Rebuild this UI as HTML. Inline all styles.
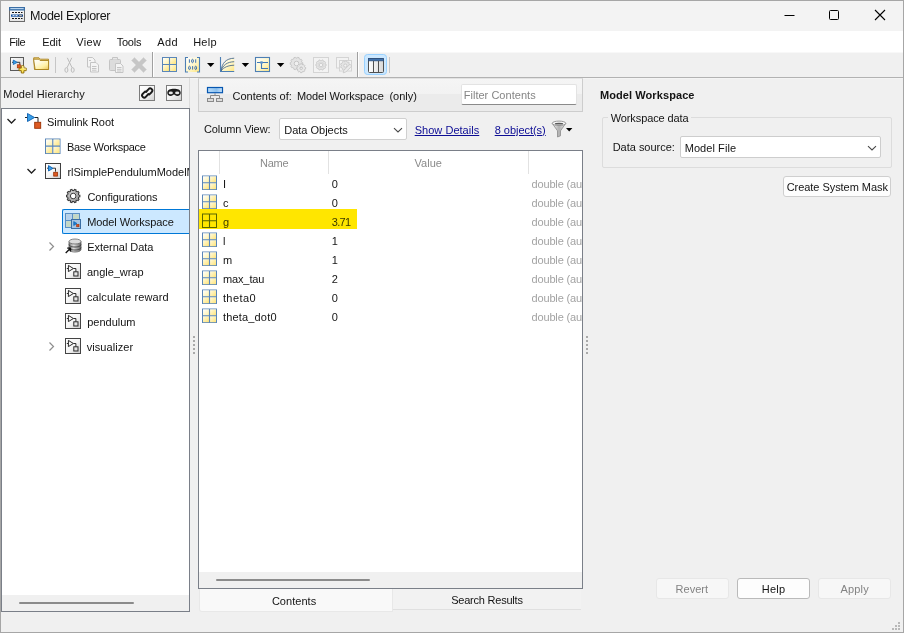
<!DOCTYPE html>
<html><head><meta charset="utf-8"><title>Model Explorer</title>
<style>
html,body{margin:0;padding:0;}
body{width:904px;height:633px;overflow:hidden;background:#f0f0f0;font-family:"Liberation Sans",sans-serif;font-size:11px;color:#141414;position:relative;}
.a{position:absolute;box-sizing:border-box;}
.t{position:absolute;white-space:nowrap;line-height:16px;height:16px;}
svg{position:absolute;overflow:visible;}
#root{position:absolute;left:0;top:0;width:904px;height:633px;will-change:transform;}

</style></head><body>
<div id="root">
<div class="a" style="left:0;top:0;width:904px;height:633px;border:1px solid #a6a6a6;background:#f0f0f0;"></div>
<div class="a" style="left:1px;top:1px;width:902px;height:30px;background:#f3f3f3;"></div>
<div class="a" style="left:1px;top:31px;width:902px;height:21px;background:#fff;"></div>
<div class="a" style="left:1px;top:52px;width:902px;height:1px;background:#f8f8f8;"></div>
<div class="a" style="left:1px;top:77px;width:902px;height:1px;background:#b2b2b2;"></div>
<div class="a" style="left:1px;top:78px;width:902px;height:1px;background:#f4f4f4;"></div>
<svg style="left:9px;top:7px" width="16" height="15" viewBox="0 0 16 15">
<defs><linearGradient id="gti" x1="0" y1="0" x2="0" y2="1"><stop offset="0" stop-color="#fff"/><stop offset="1" stop-color="#e4e4e4"/></linearGradient></defs>
<rect x="0.5" y="0.5" width="15" height="14" fill="url(#gti)" stroke="#6a6a6a"/>
<rect x="0.5" y="0.5" width="15" height="2.5" fill="#5c8fc4" stroke="#3b6ea5"/>
<rect x="1.5" y="1" width="13" height="1" fill="#b8d4ee"/>
<path d="M3 5.5h2M6 5.5h2M9 5.5h2M12 5.5h1.5M3 11.500h2M6 11.500h2M9 11.500h2M12 11.500h1.500" stroke="#111" stroke-width="1"/>
<rect x="2" y="7.500" width="12" height="2.200" fill="#0a4aa0"/>
<path d="M3.500 8.600h2M6.500 8.600h2" stroke="#fff" stroke-width="0.900"/>
<rect x="10" y="8" width="3" height="1.200" fill="#e8e8e8" stroke="#333" stroke-width="0.500"/>
</svg>
<div class="t" style="left:30.1px;top:8px;font-size:12.5px;letter-spacing:-0.28px;">Model Explorer</div>
<svg style="left:780px;top:5px" width="110" height="20" viewBox="780 5 110 20">
<path d="M784.500 15.500h10" stroke="#000" stroke-width="1" fill="none"/>
<rect x="829.500" y="10.500" width="9" height="9" rx="1" fill="none" stroke="#000" stroke-width="1"/>
<path d="M875 10l10 10M885 10l-10 10" stroke="#000" stroke-width="1.100" fill="none"/>
</svg>
<div class="t" style="left:9.2px;top:34px;font-size:11px;letter-spacing:-0.47px;">File</div>
<div class="t" style="left:42.2px;top:34px;font-size:11px;letter-spacing:-0.05px;">Edit</div>
<div class="t" style="left:76.2px;top:34px;font-size:11px;letter-spacing:0.39px;">View</div>
<div class="t" style="left:116.7px;top:34px;font-size:11px;letter-spacing:-0.22px;">Tools</div>
<div class="t" style="left:157.2px;top:34px;font-size:11px;letter-spacing:0.37px;">Add</div>
<div class="t" style="left:193.2px;top:34px;font-size:11px;letter-spacing:0.23px;">Help</div>
<div class="a" style="left:152px;top:52px;width:1px;height:25px;background:#a0a0a0;"></div><div class="a" style="left:153px;top:52px;width:1px;height:25px;background:#fff;"></div>
<div class="a" style="left:357px;top:52px;width:1px;height:25px;background:#a0a0a0;"></div><div class="a" style="left:358px;top:52px;width:1px;height:25px;background:#fff;"></div>
<div class="a" style="left:55px;top:57px;width:1px;height:16px;background:#c6c6c6;"></div>
<div class="a" style="left:389px;top:57px;width:1px;height:16px;background:#c6c6c6;"></div>
<svg style="left:0;top:52px" width="400" height="26" viewBox="0 52 400 26">
<defs>
<linearGradient id="gy" x1="0" y1="0" x2="1" y2="1"><stop offset="0" stop-color="#ffffff"/><stop offset="0.500" stop-color="#fff8d0"/><stop offset="1" stop-color="#ffe680"/></linearGradient>
<linearGradient id="gyc" x1="0" y1="0" x2="1" y2="1"><stop offset="0" stop-color="#ffffff"/><stop offset="1" stop-color="#fff2a8"/></linearGradient>
<linearGradient id="gyc2" x1="0" y1="0" x2="1" y2="1"><stop offset="0" stop-color="#fffbe0"/><stop offset="1" stop-color="#ffe478"/></linearGradient>
<linearGradient id="gg" x1="0" y1="0" x2="1" y2="1"><stop offset="0" stop-color="#ffffff"/><stop offset="1" stop-color="#d4d4d4"/></linearGradient>
<linearGradient id="gfo" x1="0" y1="0" x2="0.800" y2="1"><stop offset="0" stop-color="#ffffff"/><stop offset="0.350" stop-color="#fffbe4"/><stop offset="0.750" stop-color="#fff0a4"/><stop offset="1" stop-color="#f0d070"/></linearGradient>
<linearGradient id="gcol" x1="0" y1="0" x2="1" y2="0"><stop offset="0" stop-color="#ffffff"/><stop offset="1" stop-color="#d8d8d8"/></linearGradient>
</defs>
<!-- new model -->
<rect x="10.500" y="57.500" width="13" height="13" fill="url(#gg)" stroke="#5a5a5a"/>
<path d="M12 62.300h1.500M17 62.300h2.800v3" stroke="#222" fill="none" stroke-width="0.900"/>
<path d="M13.300 60.100l4 2.200l-4 2.200z" fill="#3aa0e8" stroke="#0b5fb0" stroke-width="0.800"/>
<rect x="17.300" y="64.800" width="3" height="3" fill="#e05a20" stroke="#a83200" stroke-width="0.700"/>
<path d="M21.300 65.800h2.600v2.300h2.300v2.600h-2.300v2.300h-2.600v-2.300h-2.300v-2.600h2.300z" fill="#ffe65a" stroke="#8a6400" stroke-width="0.900"/>
<path d="M21.900 66.500h1.300v2.300h2.300v0.700" fill="none" stroke="#fff8c0" stroke-width="0.700"/>
<!-- folder -->
<path d="M33.700 57.800h5.300l1.300 1.400h8.200v10.300h-14z" fill="#f4dc8c" stroke="#a8801c" stroke-width="0.900"/>
<path d="M33.600 59.200l1.500 10.300h13.500v-9h-8.500l-1.200 -1.300z" fill="url(#gfo)" stroke="#a8801c" stroke-width="0.900"/>
<!-- scissors -->
<g stroke="#bcbcbc" fill="none" stroke-width="1">
<path d="M71.800 57.800l-4.800 10M67.300 57.800l4.800 10" />
<ellipse cx="66.400" cy="70" rx="1.500" ry="2.300"/><ellipse cx="72.700" cy="70" rx="1.500" ry="2.300"/>
</g>
<!-- copy -->
<g stroke="#c4c4c4" fill="#f4f4f4" stroke-width="1">
<path d="M87.500 57.500h5l2.500 2.500v7h-7.500z"/>
<path d="M90.500 62.500h5.500l2.500 2.500v7h-8z"/>
<path d="M92 66.500h4.500M92 68.500h4.500M92 70.200h4.500M89 60.500h2" fill="none"/>
</g>
<!-- paste -->
<g stroke="#c4c4c4" stroke-width="1">
<rect x="109.500" y="59.500" width="11" height="11" rx="1" fill="#dcdcdc"/>
<path d="M112.500 59.500v-2h5v2" fill="#e8e8e8"/>
<path d="M115.500 63.500h5l2.500 2.500v6.500h-7.500z" fill="#f4f4f4"/>
<path d="M117 67.500h4.500M117 69.300h4.500M117 71h4.500" fill="none"/>
</g>
<!-- delete -->
<path d="M131.500 60.500l3-3l4.500 4.500l4.500-4.500l3 3l-4.500 4.500l4.500 4.500l-3 3l-4.500-4.500l-4.500 4.500l-3-3l4.500-4.500z" fill="#c6c6c6" stroke="#d4d4d4" stroke-width="0.600"/>
<!-- grid -->
<rect x="162.500" y="57.500" width="14" height="14" fill="#fff" stroke="#5a86b8"/>
<rect x="163" y="58" width="6" height="6" fill="url(#gyc)"/><rect x="170" y="58" width="6" height="6" fill="url(#gyc2)"/><rect x="163" y="65" width="6" height="6" fill="url(#gyc2)"/><rect x="170" y="65" width="6" height="6" fill="url(#gyc2)"/>
<path d="M169.500 57.500v14M162.500 64.500h14" stroke="#5a86b8" stroke-width="1.100"/>
<!-- 101 -->
<rect x="186" y="57.500" width="13" height="14.500" fill="url(#gy)"/>
<path d="M188 57.500h-2.500v14.500h2.500M197 57.500h2.500v14.500h-2.500" stroke="#4d7fb4" fill="none" stroke-width="1.100"/>
<g stroke="#2f66b0" fill="none" stroke-width="0.900">
<path d="M189.400 59.300v3.500M195.700 59.300v3.500M192.600 66.100v3.500"/>
<ellipse cx="192.500" cy="61" rx="0.900" ry="1.700"/><ellipse cx="189.500" cy="67.900" rx="0.900" ry="1.700"/><ellipse cx="195.700" cy="67.900" rx="0.900" ry="1.700"/>
</g>
<!-- arrows -->
<path d="M207 63h7.400l-3.700 4z" fill="#000"/>
<path d="M241.700 63h7.400l-3.700 4z" fill="#000"/>
<path d="M276.900 63h7.400l-3.700 4z" fill="#000"/>
<!-- curves -->
<path d="M221 71.500C222 63 226 58.500 234.200 58.200V71.500z" fill="url(#gy)"/>
<g stroke="#4a6a8c" fill="none" stroke-width="0.900">
<path d="M221 71c1-8 5-12.500 13.200-12.800"/>
<path d="M221 71c2-6 6-9 13.200-9.300"/>
<path d="M221 71c3-4 7-5.500 13.200-5.800"/>
</g>
<path d="M220.500 57v14.500h13.700" stroke="#4d7fb4" fill="none" stroke-width="1.100"/>
<!-- T icon -->
<rect x="255.500" y="57.500" width="14" height="14" fill="url(#gy)" stroke="#4d7fb4" stroke-width="1.100"/>
<path d="M257 62.500h11M261.500 62.500v6h6.500" stroke="#3f78b8" fill="none" stroke-width="1.100"/>
<rect x="260.300" y="61.300" width="2.400" height="2.400" fill="#5f94cc"/>
<!-- gears disabled -->
<path d="M301.89 62.43L302.76 62.76L302.76 64.24L301.89 64.57L301.49 65.80L302.00 66.58L301.13 67.78L300.23 67.54L299.19 68.30L299.14 69.22L297.73 69.68L297.15 68.96L295.85 68.96L295.27 69.68L293.86 69.22L293.81 68.30L292.77 67.54L291.87 67.78L291.00 66.58L291.51 65.80L291.11 64.57L290.24 64.24L290.24 62.76L291.11 62.43L291.51 61.20L291.00 60.42L291.87 59.22L292.77 59.46L293.81 58.70L293.86 57.78L295.27 57.32L295.85 58.04L297.15 58.04L297.73 57.32L299.14 57.78L299.19 58.70L300.23 59.46L301.13 59.22L302.00 60.42L301.49 61.20zM294.20 63.50a2.30 2.30 0 1 0 4.60 0a2.30 2.30 0 1 0 -4.60 0z" fill="#e4e4e4" stroke="#c2c2c2" stroke-width="0.900" fill-rule="evenodd"/>
<path d="M304.89 67.28L305.65 67.54L305.65 68.86L304.89 69.12L304.46 70.15L304.81 70.88L303.88 71.81L303.15 71.46L302.12 71.89L301.86 72.65L300.54 72.65L300.28 71.89L299.25 71.46L298.52 71.81L297.59 70.88L297.94 70.15L297.51 69.12L296.75 68.86L296.75 67.54L297.51 67.28L297.94 66.25L297.59 65.52L298.52 64.59L299.25 64.94L300.28 64.51L300.54 63.75L301.86 63.75L302.12 64.51L303.15 64.94L303.88 64.59L304.81 65.52L304.46 66.25zM299.90 68.20a1.30 1.30 0 1 0 2.60 0a1.30 1.30 0 1 0 -2.60 0z" fill="#e8e8e8" stroke="#c2c2c2" stroke-width="0.900" fill-rule="evenodd"/>
<rect x="313.500" y="57.500" width="15" height="15" fill="#f3f3f3" stroke="#d4d4d4"/>
<path d="M325.41 64.12L326.16 64.39L326.16 65.61L325.41 65.88L325.09 66.88L325.54 67.54L324.82 68.53L324.05 68.30L323.20 68.93L323.18 69.72L322.01 70.10L321.53 69.47L320.47 69.47L319.99 70.10L318.82 69.72L318.80 68.93L317.95 68.30L317.18 68.53L316.46 67.54L316.91 66.88L316.59 65.88L315.84 65.61L315.84 64.39L316.59 64.12L316.91 63.12L316.46 62.46L317.18 61.47L317.95 61.70L318.80 61.07L318.82 60.28L319.99 59.90L320.47 60.53L321.53 60.53L322.01 59.90L323.18 60.28L323.20 61.07L324.05 61.70L324.82 61.47L325.54 62.46L325.09 63.12zM319.20 65.00a1.80 1.80 0 1 0 3.60 0a1.80 1.80 0 1 0 -3.60 0z" fill="#e6e6e6" stroke="#c8c8c8" stroke-width="0.900" fill-rule="evenodd"/>
<circle cx="321" cy="65" r="3" fill="none" stroke="#d6d6d6" stroke-width="0.700"/>
<rect x="336.500" y="57.500" width="12" height="10.500" fill="#f3f3f3" stroke="#d4d4d4"/>
<rect x="339.500" y="60.500" width="12" height="10.500" fill="#f3f3f3" stroke="#d4d4d4"/>
<path d="M349.30 64.71L350.06 64.97L350.06 66.23L349.30 66.49L348.94 67.49L349.35 68.18L348.54 69.14L347.80 68.85L346.87 69.39L346.74 70.18L345.51 70.40L345.12 69.70L344.07 69.51L343.46 70.03L342.38 69.41L342.53 68.62L341.84 67.80L341.04 67.82L340.61 66.64L341.24 66.14L341.24 65.06L340.61 64.56L341.04 63.38L341.84 63.40L342.53 62.58L342.38 61.79L343.46 61.17L344.07 61.69L345.12 61.50L345.51 60.80L346.74 61.02L346.87 61.81L347.80 62.35L348.54 62.06L349.35 63.02L348.94 63.71zM343.70 65.60a1.60 1.60 0 1 0 3.20 0a1.60 1.60 0 1 0 -3.20 0z" fill="#e4e4e4" stroke="#c8c8c8" stroke-width="0.900" fill-rule="evenodd"/>
<path d="M343.200 72.800l0.800-2.600l6-6l1.800 1.800l-6 6z" fill="#ececec" stroke="#c6c6c6" stroke-width="0.800"/>
<!-- columns button -->
<rect x="364.500" y="54.500" width="22" height="20" rx="3" fill="#cce8ff" stroke="#99d1ff"/>
<rect x="368.500" y="58.500" width="15" height="14" rx="1" fill="url(#gcol)" stroke="#505050"/>
<rect x="368.500" y="58.500" width="15" height="2.300" fill="#3f72ad" stroke="#2c4f7c" stroke-width="0.800"/>
<path d="M373.500 61v11.500M378.500 61v11.500" stroke="#505050" stroke-width="1"/>
</svg>
<div class="a" style="left:1px;top:78px;width:189px;height:30px;background:#f1f1f1;border-right:1px solid #dcdcdc;"></div>
<div class="t" style="left:3.2px;top:86px;font-size:11px;letter-spacing:0.10px;">Model Hierarchy</div>
<svg style="left:136px;top:82px" width="50" height="22" viewBox="136 82 50 22">
<defs><linearGradient id="gbtn" x1="0" y1="0" x2="1" y2="1"><stop offset="0" stop-color="#ffffff"/><stop offset="0.500" stop-color="#f4f4f4"/><stop offset="1" stop-color="#cfcfcf"/></linearGradient></defs>
<rect x="139.500" y="85.500" width="15" height="15" fill="url(#gbtn)" stroke="#7c7c7c"/>
<rect x="166.500" y="85.500" width="15" height="15" fill="url(#gbtn)" stroke="#7c7c7c"/>
<g fill="none" stroke="#1a1a1a" stroke-width="1.900" stroke-linecap="round">
<path d="M146 92l2.600-2.800a2.100 2.100 0 0 1 3.200 2.800l-2.600 2.600"/>
<path d="M148.400 94l-2.600 2.800a2.100 2.100 0 0 1 -3.200 -2.800l2.600 -2.600"/>
</g>
<path d="M167.300 92.600c0.300-3 3-3.800 6.700-3.800s6.400 0.800 6.700 3.800c0.200 2-1.400 3.400-3.400 3.400c-1.800 0-2.400-1.400-3.300-1.400s-1.500 1.400-3.300 1.400c-2 0-3.600-1.400-3.400-3.400z" fill="#1a1a1a"/>
<ellipse cx="170.800" cy="92.900" rx="2.100" ry="1.400" fill="#e4e4e4"/><ellipse cx="177.200" cy="92.900" rx="2.100" ry="1.400" fill="#e4e4e4"/>
</svg>
<div class="a" style="left:1px;top:108px;width:189px;height:504px;border:1px solid #7a7f88;background:#fff;"></div>
<div class="a" style="left:2px;top:595px;width:187px;height:16px;background:#f0f0f0;"></div>
<div class="a" style="left:19px;top:602px;width:115px;height:2px;background:#8b8b8b;border-radius:1px;"></div>
<div class="a" style="left:62px;top:209px;width:127px;height:25px;border:1px solid #0078d7;border-right:none;border-radius:2px 0 0 2px;background:#cce8ff;"></div>
<svg style="left:0;top:107px" width="190" height="300" viewBox="0 107 190 300">
<defs>
<linearGradient id="gsub" x1="0" y1="0" x2="1" y2="1"><stop offset="0" stop-color="#ffffff"/><stop offset="0.500" stop-color="#f6f6f6"/><stop offset="1" stop-color="#cccccc"/></linearGradient>
<linearGradient id="gy2" x1="0" y1="0" x2="1" y2="1"><stop offset="0" stop-color="#ffffff"/><stop offset="0.450" stop-color="#fff6c4"/><stop offset="1" stop-color="#ffe36e"/></linearGradient>
<linearGradient id="gdb" x1="0" y1="0" x2="1" y2="0"><stop offset="0" stop-color="#787878"/><stop offset="0.400" stop-color="#e0e0e0"/><stop offset="1" stop-color="#5e5e5e"/></linearGradient>
<radialGradient id="ggear" cx="0.400" cy="0.350" r="0.700"><stop offset="0" stop-color="#f4f4f4"/><stop offset="1" stop-color="#a8a8a8"/></radialGradient>
</defs>
<path d="M7.5 119.0l4 4l4-4" fill="none" stroke="#1e1e1e" stroke-width="1.300"/>
<path d="M27.5 169.0l4 4l4-4" fill="none" stroke="#1e1e1e" stroke-width="1.300"/>
<path d="M49.5 242.5l4 4l-4 4" fill="none" stroke="#8e8e8e" stroke-width="1.200"/>
<path d="M49.5 342.5l4 4l-4 4" fill="none" stroke="#8e8e8e" stroke-width="1.200"/>
<path d="M25 117.500h2M34.500 117.500h3.500v4.500" stroke="#222" fill="none" stroke-width="1"/>
<path d="M27.500 113.500l7 4l-7 4z" fill="#3aa0e8" stroke="#0b5fb0" stroke-width="0.900"/>
<rect x="34.700" y="122.300" width="6" height="6" fill="#dd5a22" stroke="#9c3000" stroke-width="0.900"/>
<g transform="translate(45,138.500) scale(1.035,1.070)"><rect x="0.5" y="0.5" width="14" height="13.500" fill="#fff" stroke="#5a86b8"/><rect x="1.0" y="1.0" width="6" height="6" fill="url(#gyc)"/><rect x="8.0" y="1.0" width="6" height="6" fill="url(#gyc2)"/><rect x="1.0" y="7.7" width="6" height="6" fill="url(#gyc2)"/><rect x="8.0" y="7.7" width="6" height="6" fill="url(#gyc2)"/><path d="M7.5 0.5v13.500M0.5 7.2h14" stroke="#5a86b8" stroke-width="1.100"/></g>
<rect x="45.500" y="163.500" width="15" height="15" fill="url(#gsub)" stroke="#3e3e3e"/>
<path d="M47 168.200h1.200M53 168.200h2.500v3.500" stroke="#222" fill="none" stroke-width="0.900"/>
<path d="M48.500 165.600l4.500 2.700l-4.500 2.700z" fill="#3aa0e8" stroke="#0b5fb0" stroke-width="0.900"/>
<rect x="53.700" y="172.300" width="3.800" height="3.800" fill="#dd5a22" stroke="#9c3000" stroke-width="0.800"/>
<path d="M78.69 194.91L79.85 195.21L79.85 196.79L78.69 197.09L78.29 198.34L79.05 199.27L78.12 200.55L77.00 200.11L75.94 200.89L76.01 202.08L74.51 202.57L73.86 201.56L72.54 201.56L71.89 202.57L70.39 202.08L70.46 200.89L69.40 200.11L68.28 200.55L67.35 199.27L68.11 198.34L67.71 197.09L66.55 196.79L66.55 195.21L67.71 194.91L68.11 193.66L67.35 192.73L68.28 191.45L69.40 191.89L70.46 191.11L70.39 189.92L71.89 189.43L72.54 190.44L73.86 190.44L74.51 189.43L76.01 189.92L75.94 191.11L77.00 191.89L78.12 191.45L79.05 192.73L78.29 193.66z" fill="url(#ggear)" stroke="#383838" stroke-width="1.100"/>
<circle cx="73.200" cy="196" r="4.100" fill="none" stroke="#808080" stroke-width="0.600"/>
<circle cx="73.200" cy="196" r="2.800" fill="#fff" stroke="#383838" stroke-width="1"/>
<rect x="65.500" y="213.500" width="14" height="14" fill="#c4d8dc" stroke="#5a8fc4"/>
<path d="M72.500 213.500v14M65.500 220.500h14" stroke="#5a8fc4" stroke-width="1.100"/>
<rect x="66.500" y="214.500" width="5.500" height="5.500" fill="#b4d0ec"/><rect x="73.200" y="214.500" width="5.700" height="5.500" fill="#c4d8c4"/><rect x="66.500" y="221.200" width="5.500" height="5.700" fill="#c4d8c4"/>
<rect x="71.500" y="219.500" width="9" height="9" fill="#a4c4e4" stroke="#3a6ea5"/>
<path d="M73.700 221.500l3.300 2l-3.300 2z" fill="#1f7fd0" stroke="#0b5fb0" stroke-width="0.600"/>
<rect x="76.700" y="224.500" width="2.300" height="2.300" fill="#dd4a22" stroke="#9c3000" stroke-width="0.600"/>
<path d="M69 241.500v8c0 1.500 2.700 2.500 6 2.500s6-1 6-2.500v-8z" fill="url(#gdb)" stroke="#5a5a5a" stroke-width="0.800"/>
<ellipse cx="75" cy="241.500" rx="6" ry="2.500" fill="#dcdcdc" stroke="#6a6a6a" stroke-width="0.800"/>
<path d="M69 244.500c0 1.500 2.700 2.500 6 2.500s6-1 6-2.500M69 247.500c0 1.500 2.700 2.500 6 2.500s6-1 6-2.500" fill="none" stroke="#3a3a3a" stroke-width="0.900"/>
<path d="M65.700 253l4.300-4.300M67.200 248.200h3.300v3.300" fill="none" stroke="#111" stroke-width="1.300"/>
<rect x="65.5" y="263.5" width="15" height="15" fill="url(#gsub)" stroke="#444"/><path d="M68.4 265.4l5 3.100l-5 3.100zM73.4 268.5h2.500v3.200M66.8 268.5h1.500" fill="none" stroke="#2a2a2a" stroke-width="1"/><rect x="73.8" y="271.8" width="4.200" height="4.200" fill="none" stroke="#2a2a2a" stroke-width="1"/>
<rect x="65.5" y="288.5" width="15" height="15" fill="url(#gsub)" stroke="#444"/><path d="M68.4 290.4l5 3.100l-5 3.100zM73.4 293.5h2.500v3.200M66.8 293.5h1.500" fill="none" stroke="#2a2a2a" stroke-width="1"/><rect x="73.8" y="296.8" width="4.200" height="4.200" fill="none" stroke="#2a2a2a" stroke-width="1"/>
<rect x="65.5" y="313.5" width="15" height="15" fill="url(#gsub)" stroke="#444"/><path d="M68.4 315.4l5 3.100l-5 3.100zM73.4 318.5h2.500v3.200M66.8 318.5h1.500" fill="none" stroke="#2a2a2a" stroke-width="1"/><rect x="73.8" y="321.8" width="4.200" height="4.200" fill="none" stroke="#2a2a2a" stroke-width="1"/>
<rect x="65.5" y="338.5" width="15" height="15" fill="url(#gsub)" stroke="#444"/><path d="M68.4 340.4l5 3.100l-5 3.100zM73.4 343.5h2.500v3.200M66.8 343.5h1.500" fill="none" stroke="#2a2a2a" stroke-width="1"/><rect x="73.8" y="346.8" width="4.200" height="4.200" fill="none" stroke="#2a2a2a" stroke-width="1"/>
</svg>
<div class="t" style="left:47.0px;top:114px;font-size:11px;letter-spacing:-0.07px;">Simulink Root</div>
<div class="t" style="left:66.9px;top:139px;font-size:11px;letter-spacing:-0.30px;">Base Workspace</div>
<div class="t" style="left:67.4px;top:164px;font-size:11px;width:121.6px;overflow:hidden;">rlSimplePendulumModelM</div>
<div class="t" style="left:87.4px;top:189px;font-size:11px;letter-spacing:-0.06px;">Configurations</div>
<div class="t" style="left:87.2px;top:214px;font-size:11px;letter-spacing:-0.09px;">Model Workspace</div>
<div class="t" style="left:87.2px;top:239px;font-size:11px;letter-spacing:-0.03px;">External Data</div>
<div class="t" style="left:87.0px;top:264px;font-size:11px;letter-spacing:-0.04px;">angle_wrap</div>
<div class="t" style="left:87.0px;top:289px;font-size:11px;letter-spacing:0.10px;">calculate reward</div>
<div class="t" style="left:87.2px;top:314px;font-size:11px;">pendulum</div>
<div class="t" style="left:86.7px;top:339px;font-size:11px;letter-spacing:0.07px;">visualizer</div>
<div class="a" style="left:193px;top:336px;width:2px;height:2px;background:#a9a9a9;"></div><div class="a" style="left:193px;top:340px;width:2px;height:2px;background:#a9a9a9;"></div><div class="a" style="left:193px;top:344px;width:2px;height:2px;background:#a9a9a9;"></div><div class="a" style="left:193px;top:348px;width:2px;height:2px;background:#a9a9a9;"></div><div class="a" style="left:193px;top:352px;width:2px;height:2px;background:#a9a9a9;"></div>
<div class="a" style="left:586px;top:336px;width:2px;height:2px;background:#a9a9a9;"></div><div class="a" style="left:586px;top:340px;width:2px;height:2px;background:#a9a9a9;"></div><div class="a" style="left:586px;top:344px;width:2px;height:2px;background:#a9a9a9;"></div><div class="a" style="left:586px;top:348px;width:2px;height:2px;background:#a9a9a9;"></div><div class="a" style="left:586px;top:352px;width:2px;height:2px;background:#a9a9a9;"></div>
<div class="a" style="left:198px;top:78px;width:385px;height:34px;border:1px solid #cdcdcd;border-top:1px solid #e2e2e2;background:linear-gradient(#f5f5f5 0,#f2f2f2 15px,#ebebeb 15px,#ebebeb 100%);"></div>
<svg style="left:205px;top:85px" width="20" height="19" viewBox="205 85 20 19">
<defs><linearGradient id="gbl" x1="0" y1="0" x2="1" y2="0"><stop offset="0" stop-color="#b8dcfa"/><stop offset="0.600" stop-color="#8cc0ee"/><stop offset="1" stop-color="#c8e2fa"/></linearGradient></defs>
<rect x="207.500" y="87.500" width="15" height="5.200" fill="url(#gbl)" stroke="#0656b0" stroke-width="1.200"/>
<path d="M215 93.200v2.300M210.500 98.500v-3h9v3" stroke="#8a8a8a" fill="none" stroke-width="1"/>
<rect x="207.500" y="98.500" width="6" height="3" fill="#dcdcdc" stroke="#8a8a8a"/>
<rect x="216.500" y="98.500" width="6" height="3" fill="#dcdcdc" stroke="#8a8a8a"/>
</svg>
<div class="t" style="left:232.5px;top:88px;font-size:11px;">Contents of:</div>
<div class="t" style="left:296.9px;top:88px;font-size:11px;letter-spacing:-0.07px;">Model Workspace</div>
<div class="t" style="left:389.5px;top:88px;font-size:11px;letter-spacing:-0.04px;">(only)</div>
<div class="a" style="left:461px;top:84px;width:116px;height:21px;background:#fff;border:1px solid #e3e3e3;border-bottom:1px solid #8a8a8a;border-radius:2px;"></div>
<div class="t" style="left:463.7px;top:87px;font-size:11px;letter-spacing:0.03px;color:#858585;">Filter Contents</div>
<div class="t" style="left:203.9px;top:121px;font-size:11px;letter-spacing:-0.09px;">Column View:</div>
<div class="a" style="left:279px;top:118px;width:128px;height:22px;background:#fff;border:1px solid #d0d0d0;border-radius:2px;"></div>
<div class="t" style="left:284.2px;top:122px;font-size:11px;">Data Objects</div>
<svg style="left:392px;top:124px" width="12" height="10" viewBox="0 0 12 10"><path d="M2 4.200l4 3.700l4-3.700" fill="none" stroke="#484848" stroke-width="1.100"/></svg>
<div class="t" style="left:414.7px;top:122px;font-size:11px;letter-spacing:0.03px;color:#0c0c94;text-decoration:underline;">Show Details</div>
<div class="t" style="left:494.7px;top:122px;font-size:11px;letter-spacing:-0.03px;color:#0c0c94;text-decoration:underline;">8 object(s)</div>
<svg style="left:550px;top:119px" width="26" height="20" viewBox="550 119 26 20">
<defs><linearGradient id="gfu" x1="0" y1="0" x2="1" y2="0"><stop offset="0" stop-color="#f4f4f4"/><stop offset="0.500" stop-color="#b0b0b0"/><stop offset="1" stop-color="#e8e8e8"/></linearGradient></defs>
<path d="M552.300 123.500l5.200 7.300v6.200l3-1.200v-5l5.200-7.300z" fill="url(#gfu)" stroke="#8a8a8a" stroke-width="0.800"/>
<ellipse cx="559" cy="123.300" rx="6.800" ry="2.200" fill="#f8f8f8" stroke="#909090" stroke-width="0.900"/>
<ellipse cx="559" cy="123.700" rx="4.200" ry="0.900" fill="#5a5a5a"/>
<path d="M566 128h6.400l-3.200 3.400z" fill="#000"/>
</svg>
<div class="a" style="left:198px;top:150px;width:385px;height:439px;border:1px solid #7a7f88;background:#fff;"></div>
<div class="a" style="left:219px;top:151px;width:1px;height:23px;background:#e2e2e2;"></div>
<div class="a" style="left:328px;top:151px;width:1px;height:23px;background:#e2e2e2;"></div>
<div class="a" style="left:528px;top:151px;width:1px;height:23px;background:#e2e2e2;"></div>
<div class="t" style="left:259.9px;top:155px;font-size:11px;letter-spacing:-0.17px;color:#8a8a8a;">Name</div>
<div class="t" style="left:414.5px;top:155px;font-size:11px;letter-spacing:0.02px;color:#8a8a8a;">Value</div>
<div class="a" style="left:199px;top:209px;width:158px;height:20px;background:#ffe600;"></div>
<div class="t" style="left:222.9px;top:176px;font-size:11px;letter-spacing:0.06px;">I</div>
<div class="t" style="left:331.7px;top:176px;font-size:11px;letter-spacing:0.20px;">0</div>
<div class="t" style="left:531.5px;top:176px;font-size:11px;letter-spacing:-0.15px;color:#a3a3a3;width:50.5px;overflow:hidden;">double (auto)</div>
<div class="t" style="left:222.9px;top:195px;font-size:11px;letter-spacing:1.12px;">c</div>
<div class="t" style="left:331.7px;top:195px;font-size:11px;letter-spacing:0.20px;">0</div>
<div class="t" style="left:531.5px;top:195px;font-size:11px;letter-spacing:-0.15px;color:#a3a3a3;width:50.5px;overflow:hidden;">double (auto)</div>
<div class="t" style="left:222.9px;top:214px;font-size:11px;letter-spacing:1.00px;color:#3c3a00;">g</div>
<div class="t" style="left:331.7px;top:214px;font-size:11px;letter-spacing:-0.63px;color:#3c3a00;">3.71</div>
<div class="t" style="left:531.5px;top:214px;font-size:11px;letter-spacing:-0.15px;color:#a3a3a3;width:50.5px;overflow:hidden;">double (auto)</div>
<div class="t" style="left:222.9px;top:233px;font-size:11px;letter-spacing:0.37px;">l</div>
<div class="t" style="left:331.7px;top:233px;font-size:11px;letter-spacing:0.20px;">1</div>
<div class="t" style="left:531.5px;top:233px;font-size:11px;letter-spacing:-0.15px;color:#a3a3a3;width:50.5px;overflow:hidden;">double (auto)</div>
<div class="t" style="left:222.9px;top:252px;font-size:11px;letter-spacing:0.95px;">m</div>
<div class="t" style="left:331.7px;top:252px;font-size:11px;letter-spacing:0.20px;">1</div>
<div class="t" style="left:531.5px;top:252px;font-size:11px;letter-spacing:-0.15px;color:#a3a3a3;width:50.5px;overflow:hidden;">double (auto)</div>
<div class="t" style="left:222.9px;top:271px;font-size:11px;letter-spacing:-0.10px;">max_tau</div>
<div class="t" style="left:331.7px;top:271px;font-size:11px;letter-spacing:0.20px;">2</div>
<div class="t" style="left:531.5px;top:271px;font-size:11px;letter-spacing:-0.15px;color:#a3a3a3;width:50.5px;overflow:hidden;">double (auto)</div>
<div class="t" style="left:222.9px;top:290px;font-size:11px;letter-spacing:0.41px;">theta0</div>
<div class="t" style="left:331.7px;top:290px;font-size:11px;letter-spacing:0.20px;">0</div>
<div class="t" style="left:531.5px;top:290px;font-size:11px;letter-spacing:-0.15px;color:#a3a3a3;width:50.5px;overflow:hidden;">double (auto)</div>
<div class="t" style="left:222.9px;top:309px;font-size:11px;letter-spacing:0.18px;">theta_dot0</div>
<div class="t" style="left:331.7px;top:309px;font-size:11px;letter-spacing:0.20px;">0</div>
<div class="t" style="left:531.5px;top:309px;font-size:11px;letter-spacing:-0.15px;color:#a3a3a3;width:50.5px;overflow:hidden;">double (auto)</div>
<svg style="left:199px;top:170px" width="30" height="160" viewBox="199 170 30 160">
<rect x="202.5" y="176.0" width="14" height="13.500" fill="#fff" stroke="#5a86b8"/><rect x="203.0" y="176.5" width="6" height="6" fill="url(#gyc)"/><rect x="210.0" y="176.5" width="6" height="6" fill="url(#gyc2)"/><rect x="203.0" y="183.2" width="6" height="6" fill="url(#gyc2)"/><rect x="210.0" y="183.2" width="6" height="6" fill="url(#gyc2)"/><path d="M209.5 176.0v13.500M202.5 182.7h14" stroke="#5a86b8" stroke-width="1.100"/>
<rect x="202.5" y="195.0" width="14" height="13.500" fill="#fff" stroke="#5a86b8"/><rect x="203.0" y="195.5" width="6" height="6" fill="url(#gyc)"/><rect x="210.0" y="195.5" width="6" height="6" fill="url(#gyc2)"/><rect x="203.0" y="202.2" width="6" height="6" fill="url(#gyc2)"/><rect x="210.0" y="202.2" width="6" height="6" fill="url(#gyc2)"/><path d="M209.5 195.0v13.500M202.5 201.7h14" stroke="#5a86b8" stroke-width="1.100"/>
<rect x="202.5" y="214.0" width="14" height="13.500" fill="#ffe600" stroke="#5a6600"/><path d="M209.5 214.0v13.500M202.5 220.7h14" stroke="#5a6600" stroke-width="1.100"/>
<rect x="202.5" y="233.0" width="14" height="13.500" fill="#fff" stroke="#5a86b8"/><rect x="203.0" y="233.5" width="6" height="6" fill="url(#gyc)"/><rect x="210.0" y="233.5" width="6" height="6" fill="url(#gyc2)"/><rect x="203.0" y="240.2" width="6" height="6" fill="url(#gyc2)"/><rect x="210.0" y="240.2" width="6" height="6" fill="url(#gyc2)"/><path d="M209.5 233.0v13.500M202.5 239.7h14" stroke="#5a86b8" stroke-width="1.100"/>
<rect x="202.5" y="252.0" width="14" height="13.500" fill="#fff" stroke="#5a86b8"/><rect x="203.0" y="252.5" width="6" height="6" fill="url(#gyc)"/><rect x="210.0" y="252.5" width="6" height="6" fill="url(#gyc2)"/><rect x="203.0" y="259.2" width="6" height="6" fill="url(#gyc2)"/><rect x="210.0" y="259.2" width="6" height="6" fill="url(#gyc2)"/><path d="M209.5 252.0v13.500M202.5 258.7h14" stroke="#5a86b8" stroke-width="1.100"/>
<rect x="202.5" y="271.0" width="14" height="13.500" fill="#fff" stroke="#5a86b8"/><rect x="203.0" y="271.5" width="6" height="6" fill="url(#gyc)"/><rect x="210.0" y="271.5" width="6" height="6" fill="url(#gyc2)"/><rect x="203.0" y="278.2" width="6" height="6" fill="url(#gyc2)"/><rect x="210.0" y="278.2" width="6" height="6" fill="url(#gyc2)"/><path d="M209.5 271.0v13.500M202.5 277.7h14" stroke="#5a86b8" stroke-width="1.100"/>
<rect x="202.5" y="290.0" width="14" height="13.500" fill="#fff" stroke="#5a86b8"/><rect x="203.0" y="290.5" width="6" height="6" fill="url(#gyc)"/><rect x="210.0" y="290.5" width="6" height="6" fill="url(#gyc2)"/><rect x="203.0" y="297.2" width="6" height="6" fill="url(#gyc2)"/><rect x="210.0" y="297.2" width="6" height="6" fill="url(#gyc2)"/><path d="M209.5 290.0v13.500M202.5 296.7h14" stroke="#5a86b8" stroke-width="1.100"/>
<rect x="202.5" y="309.0" width="14" height="13.500" fill="#fff" stroke="#5a86b8"/><rect x="203.0" y="309.5" width="6" height="6" fill="url(#gyc)"/><rect x="210.0" y="309.5" width="6" height="6" fill="url(#gyc2)"/><rect x="203.0" y="316.2" width="6" height="6" fill="url(#gyc2)"/><rect x="210.0" y="316.2" width="6" height="6" fill="url(#gyc2)"/><path d="M209.5 309.0v13.500M202.5 315.7h14" stroke="#5a86b8" stroke-width="1.100"/>
</svg>
<div class="a" style="left:199px;top:572px;width:383px;height:16px;background:#f0f0f0;"></div>
<div class="a" style="left:216px;top:579px;width:154px;height:2px;background:#8b8b8b;border-radius:1px;"></div>
<div class="a" style="left:199px;top:589px;width:194px;height:23px;background:#f9f9f9;border:1px solid #e8e8e8;border-top:none;border-radius:0 0 0 3px;"></div>
<div class="a" style="left:393px;top:589px;width:188px;height:21px;background:#f2f2f2;border-bottom:1px solid #e0e0e0;"></div>
<div class="t" style="left:271.9px;top:593px;font-size:11px;letter-spacing:0.03px;">Contents</div>
<div class="t" style="left:451.2px;top:592px;font-size:11px;letter-spacing:-0.22px;">Search Results</div>
<div class="t" style="left:599.9px;top:87px;font-size:11px;letter-spacing:0.09px;font-weight:bold;">Model Workspace</div>
<div class="a" style="left:602px;top:117px;width:290px;height:51px;border:1px solid #dcdcdc;border-radius:2px;"></div>
<div class="a" style="left:608px;top:112px;width:83px;height:12px;background:#f0f0f0;"></div>
<div class="t" style="left:610.7px;top:110px;font-size:11px;letter-spacing:-0.10px;">Workspace data</div>
<div class="t" style="left:612.7px;top:139px;font-size:11px;letter-spacing:-0.02px;">Data source:</div>
<div class="a" style="left:680px;top:136px;width:201px;height:22px;background:#fff;border:1px solid #cdcdcd;border-radius:2px;"></div>
<div class="t" style="left:684.7px;top:140px;font-size:11px;letter-spacing:0.07px;">Model File</div>
<svg style="left:866px;top:143px" width="12" height="10" viewBox="0 0 12 10"><path d="M2 3.200l4 3.700l4-3.700" fill="none" stroke="#484848" stroke-width="1.100"/></svg>
<div class="a" style="left:783px;top:176px;width:108px;height:21px;background:#fdfdfd;border:1px solid #cfcfcf;border-radius:3px;"></div>
<div class="t" style="left:786.7px;top:179px;font-size:11px;letter-spacing:-0.05px;">Create System Mask</div>
<div class="a" style="left:656px;top:578px;width:73px;height:21px;background:#f7f7f7;border:1px solid #e7e7e7;border-radius:3px;"></div>
<div class="a" style="left:737px;top:578px;width:73px;height:21px;background:#fdfdfd;border:1px solid #bababa;border-radius:3px;"></div>
<div class="a" style="left:818px;top:578px;width:73px;height:21px;background:#f7f7f7;border:1px solid #e7e7e7;border-radius:3px;"></div>
<div class="t" style="left:675.5px;top:581px;font-size:11px;letter-spacing:0.04px;color:#838383;">Revert</div>
<div class="t" style="left:761.7px;top:581px;font-size:11px;letter-spacing:0.27px;">Help</div>
<div class="t" style="left:840.5px;top:581px;font-size:11px;letter-spacing:0.17px;color:#838383;">Apply</div>
<div class="a" style="left:898px;top:622px;width:2px;height:2px;background:#b8b8b8;"></div><div class="a" style="left:895px;top:625px;width:2px;height:2px;background:#b8b8b8;"></div><div class="a" style="left:898px;top:625px;width:2px;height:2px;background:#b8b8b8;"></div><div class="a" style="left:892px;top:628px;width:2px;height:2px;background:#b8b8b8;"></div><div class="a" style="left:895px;top:628px;width:2px;height:2px;background:#b8b8b8;"></div><div class="a" style="left:898px;top:628px;width:2px;height:2px;background:#b8b8b8;"></div>
</div>
</body></html>
